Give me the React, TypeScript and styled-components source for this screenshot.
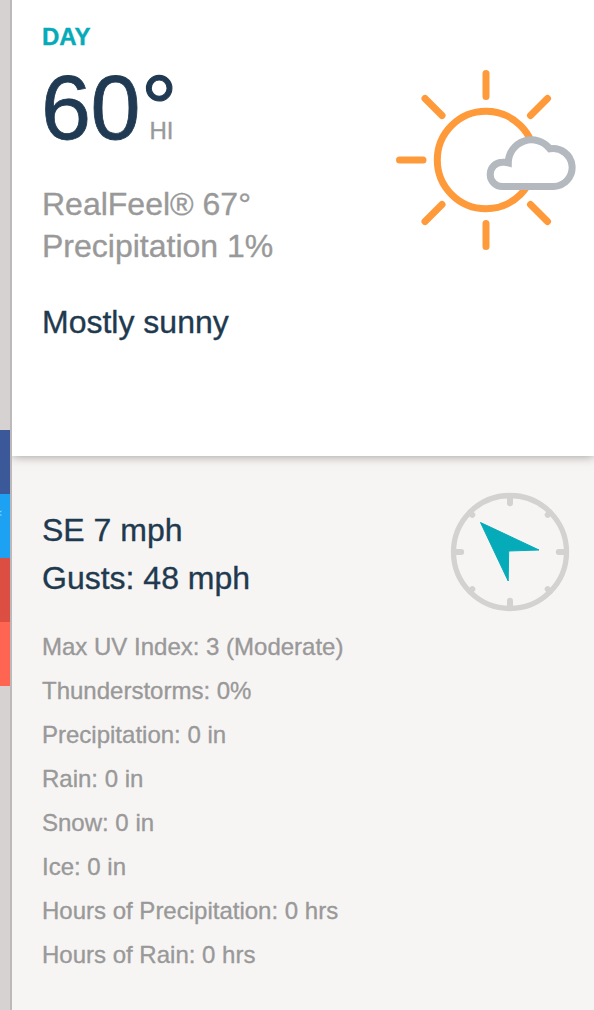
import React from "react";
import styled, { createGlobalStyle } from "styled-components";

const GlobalStyle = createGlobalStyle`
  * { box-sizing: border-box; }
  body {
    margin: 0;
    background: #f7f5f4;
    font-family: "Liberation Sans", Arial, Helvetica, sans-serif;
  }
`;

const Page = styled.div`
  display: flex;
  height: 1010px;
  overflow: hidden;
`;

const ShareRail = styled.aside`
  flex: none;
  width: 12px;
  padding-top: 430px;
  background: #d5d2d1;
  border-right: 2px solid #bdb8b9;
`;

const ShareButton = styled.div<{ $color: string }>`
  display: flex;
  height: 64px;
  padding-top: 16px;
  background: ${(p) => p.$color};
`;

const Panels = styled.main`
  flex: 1;
  display: flex;
  flex-direction: column;
  overflow: hidden;
  -webkit-text-stroke: 0.35px currentColor;
`;

const DayPanel = styled.section`
  position: relative;
  display: flex;
  justify-content: space-between;
  height: 456px;
  padding: 22px 16px 0 30px;
  background: #fff;
  box-shadow: 0 0 10px rgba(60, 50, 45, 0.5);
`;

const DetailPanel = styled.section`
  flex: 1;
  padding: 50px 24px 0 30px;
  background: #f7f5f4;
`;

const DayLabel = styled.h2`
  margin: 0;
  font-size: 24px;
  line-height: 30px;
  color: #05abb8;
`;

const Temperature = styled.div`
  display: flex;
  align-items: baseline;
  height: 108px;
  margin-top: 2px;
  line-height: 108px;
  color: #1f3a52;
`;

const Degrees = styled.span`
  margin-left: -1px;
  font-size: 90px;
  letter-spacing: -0.5px;
  -webkit-text-stroke-width: 0.8px;
`;

const DegreeSign = styled.span`
  margin-left: 1px;
  font-size: 91px;
  -webkit-text-stroke-width: 1.1px;
`;

const High = styled.span`
  margin-left: -28px;
  font-size: 24px;
  color: #999;
`;

const Feel = styled.div`
  margin-top: 21px;
  font-size: 32px;
  line-height: 42px;
  color: #999;
`;

const Condition = styled.div`
  margin-top: 34px;
  font-size: 32px;
  line-height: 42px;
  color: #1f3a4f;
`;

const SunIcon = styled.svg`
  flex: none;
  width: 184px;
  height: 184px;
  margin-top: 46px;
`;

const WindRow = styled.div`
  display: flex;
  justify-content: space-between;
  height: 119px;
  font-size: 32px;
  line-height: 48px;
  color: #1f3a4f;
`;

const CompassIcon = styled.svg`
  flex: none;
  width: 120px;
  height: 120px;
  margin-top: -14px;
`;

const Stats = styled.ul`
  margin: 0;
  padding: 0;
  list-style: none;
  font-size: 24px;
  line-height: 44px;
  color: #999;
`;

const shareColors = ["#3b5998", "#1da1f2", "#dc4e41", "#ff6550"];

const stats = [
  "Max UV Index: 3 (Moderate)",
  "Thunderstorms: 0%",
  "Precipitation: 0 in",
  "Rain: 0 in",
  "Snow: 0 in",
  "Ice: 0 in",
  "Hours of Precipitation: 0 hrs",
  "Hours of Rain: 0 hrs",
];

function MostlySunny() {
  return (
    <SunIcon viewBox="394 68 184 184" fill="none" strokeWidth="7" strokeLinecap="round">
      <g stroke="#ff9a3a">
        <circle cx="486" cy="160" r="48.7" />
        <path d="M486 73.5v23M486 223.5v23M399.5 160h23.5M425 98.5l17 17M547.5 98.5l-17 17M425 221.5l17-17M547.5 221.5l-17-17" />
      </g>
      <path
        d="M502.3 186.5a12.1 12.1 0 0 1 0-24.2Q505.5 162 508.300 162.800A23.200 23.200 0 0 1 549.800 148.800A19 19 0 1 1 553.700 186.500Z"
        fill="#fff"
        stroke="#b3b9be"
        strokeLinecap="butt"
      />
    </SunIcon>
  );
}

function WindCompass() {
  return (
    <CompassIcon viewBox="450 492 120 120" fill="none">
      <circle cx="510" cy="552" r="56.5" stroke="#d3d2d0" strokeWidth="5.3" />
      <g stroke="#d3d2d0" strokeWidth="6" strokeLinecap="round">
        <path d="M510 497v6.2M510 600.8v6.2M455 552h6.2M565 552h-6.2" />
        <path d="M470 512.5l2.3 2.3M550 512.5l-2.3 2.3M470 591.5l2.3-2.3M550 591.5l-2.3-2.3" />
      </g>
      <path
        d="M480.5 522.5L539 550L508.7 551L508.2 581Z"
        fill="#05abb8"
        stroke="#05abb8"
        strokeWidth="1"
        strokeLinejoin="round"
      />
    </CompassIcon>
  );
}

export default function App() {
  return (
    <>
      <GlobalStyle />
      <Page>
        <ShareRail>
          {shareColors.map((color) => (
            <ShareButton key={color} $color={color}>
              {color === "#1da1f2" && (
                <svg width="3" height="8" viewBox="0 0 3 8">
                  <path d="M0 2l1.500-1M0 5h1.500" stroke="#a5dbfb" fill="none" />
                </svg>
              )}
            </ShareButton>
          ))}
        </ShareRail>
        <Panels>
          <DayPanel>
            <div>
              <DayLabel>DAY</DayLabel>
              <Temperature>
                <Degrees>60</Degrees>
                <DegreeSign>°</DegreeSign>
                <High>HI</High>
              </Temperature>
              <Feel>
                <div>RealFeel® 67°</div>
                <div>Precipitation 1%</div>
              </Feel>
              <Condition>Mostly sunny</Condition>
            </div>
            <MostlySunny />
          </DayPanel>
          <DetailPanel>
            <WindRow>
              <div>
                <div>SE 7 mph</div>
                <div>Gusts: 48 mph</div>
              </div>
              <WindCompass />
            </WindRow>
            <Stats>
              {stats.map((s) => (
                <li key={s}>{s}</li>
              ))}
            </Stats>
          </DetailPanel>
        </Panels>
      </Page>
    </>
  );
}
